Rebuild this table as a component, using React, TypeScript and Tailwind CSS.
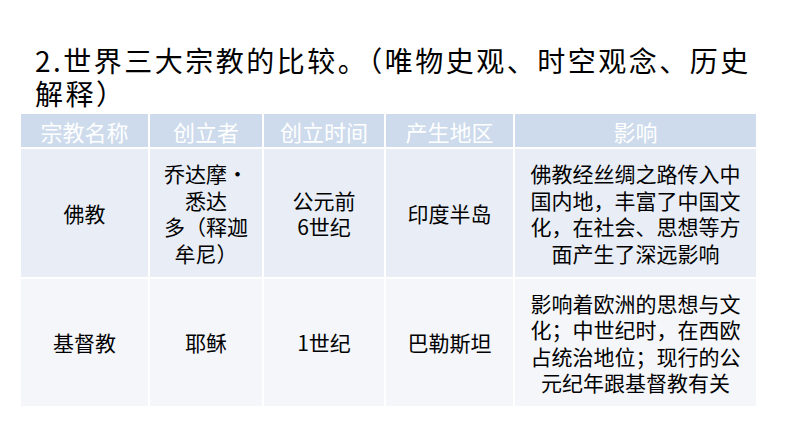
const cjk = "font-['Noto_Sans_CJK_SC',sans-serif]";

const headers = ['宗教名称', '创立者', '创立时间', '产生地区', '影响'];

const rows = [
    {
        bg: 'bg-[#e9eef6]',
        h: 'h-[128px]',
        cells: [
            ['佛教'],
            ['乔达摩·', '悉达', '多（释迦', '牟尼）'],
            ['公元前', '6世纪'],
            ['印度半岛'],
            ['佛教经丝绸之路传入中', '国内地，丰富了中国文', '化，在社会、思想等方', '面产生了深远影响'],
        ],
    },
    {
        bg: 'bg-[#f4f6fa]',
        h: 'h-[127px]',
        cells: [
            ['基督教'],
            ['耶稣'],
            ['1世纪'],
            ['巴勒斯坦'],
            ['影响着欧洲的思想与文', '化；中世纪时，在西欧', '占统治地位；现行的公', '元纪年跟基督教有关'],
        ],
    },
];

export default function App() {
    return (
        <div className={`w-[794px] h-[447px] bg-white overflow-hidden ${cjk}`}>
            <h1 className="pt-[44px] pl-[35px] text-[28px] leading-[33px] tracking-[2.5px] text-black font-normal">
                2.世界三大宗教的比较。（唯物史观、时空观念、历史
                <br />
                解释）
            </h1>

            <div className="mt-[4px] ml-[21px] w-[735px] grid grid-cols-[127px_112px_120px_127px_1fr] gap-[2px] bg-white">
                {headers.map(h => (
                    <div key={h} className="h-[33px] bg-[#cddbec] flex items-center justify-center text-white text-[22px] leading-none">
                        {h}
                    </div>
                ))}
                {rows.map((row, ri) =>
                    row.cells.map((lines, ci) => (
                        <div
                            key={`${ri}-${ci}`}
                            className={`${row.h} ${row.bg} flex flex-col items-center justify-center text-center text-[21px] leading-[26.5px] text-black`}
                        >
                            {lines.map(l => (
                                <span key={l} className="whitespace-nowrap">{l}</span>
                            ))}
                        </div>
                    ))
                )}
            </div>
        </div>
    );
}
